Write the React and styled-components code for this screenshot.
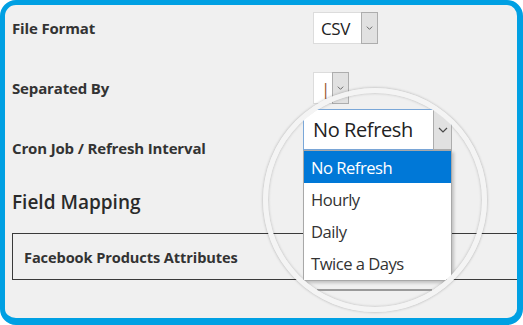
import React from 'react'
import styled, { createGlobalStyle } from 'styled-components'

const Global = createGlobalStyle`
  html, body { margin: 0; padding: 0; background: #ffffff; }
  body { font-family: "Open Sans", "Noto Sans", sans-serif; }
`

const Chevron = ({ size = 7 }) => (
  <svg width={size} height={Math.round(size * 0.6)} viewBox="0 0 10 6">
    <polyline points="1,1 5,5 9,1" fill="none" stroke="#4a4a4a" strokeWidth="1.2" />
  </svg>
)

function Select({ value, width, height, fontSize, arrowWidth, valueColor, focused }) {
  return (
    <SelectBox $w={width} $h={height} $focused={focused}>
      <SelectValue $size={fontSize} $color={valueColor}>{value}</SelectValue>
      <Arrow $w={arrowWidth}>
        <Chevron size={arrowWidth > 18 ? 10 : 7} />
      </Arrow>
    </SelectBox>
  )
}

const options = ['No Refresh', 'Hourly', 'Daily', 'Twice a Days']

function App() {
  return (
    <>
      <Global />
      <Frame>
        <Form>
          <Row>
            <Label>File Format</Label>
            <Select value="CSV" width={65} height={32} fontSize={17} arrowWidth={17} />
          </Row>
          <Row>
            <Label>Separated By</Label>
            <Select value="|" width={36} height={32} fontSize={17} arrowWidth={17} valueColor="#9a5b2e" />
          </Row>
          <Row>
            <Label>Cron Job / Refresh Interval</Label>
            {/* the real select sits under the magnifier, so only its box is kept */}
            <Select value="" width={120} height={32} fontSize={14} arrowWidth={17} />
          </Row>
        </Form>
        <Heading>Field Mapping</Heading>
        <Table>
          <HeadCell>Facebook Products Attributes</HeadCell>
        </Table>

        <Magnifier>
          <ZoomSelect>
            <Select value="No Refresh" width={149} height={41} fontSize={20} arrowWidth={19} focused />
          </ZoomSelect>
          <List>
            {options.map((o, i) => (
              <Option key={o} $active={i === 0}>{o}</Option>
            ))}
          </List>
          <Shade />
        </Magnifier>
      </Frame>
    </>
  )
}

const Frame = styled.div`
  position: relative;
  box-sizing: border-box;
  width: 523px;
  height: 325px;
  border: 5px solid #00a0e3;
  border-bottom-width: 7px;
  border-right-width: 6px;
  border-radius: 16px;
  background: #f0f0f0;
  overflow: hidden;
  padding: 7px 0 0 7px;
`

const Form = styled.div`
  display: flex;
  flex-direction: column;
  gap: 28px;
`

const Row = styled.div`
  display: grid;
  grid-template-columns: 301px auto;
  align-items: center;
  height: 32px;
`

const Label = styled.div`
  font-size: 15px;
  font-weight: 700;
  color: #333;
  letter-spacing: -0.15px;
`

const SelectBox = styled.div`
  box-sizing: border-box;
  display: flex;
  width: ${p => p.$w}px;
  height: ${p => p.$h}px;
  background: #fff;
  border: 1px solid ${p => (p.$focused ? '#7aa7d8' : '#dcdcdc')};
`

const SelectValue = styled.div`
  flex: 1;
  display: flex;
  align-items: center;
  padding-left: ${p => (p.$size > 18 ? 9 : 7)}px;
  font-size: ${p => p.$size}px;
  color: ${p => p.$color || '#222'};
  letter-spacing: -0.4px;
  white-space: nowrap;
  overflow: hidden;
`

const Arrow = styled.div`
  box-sizing: border-box;
  width: ${p => p.$w}px;
  margin: -1px -1px -1px 0;
  background: #e1e1e1;
  border: 1px solid #adadad;
  display: flex;
  align-items: center;
  justify-content: center;
`

const Heading = styled.div`
  margin-top: 25px;
  height: 26px;
  line-height: 26px;
  font-size: 19px;
  font-weight: 600;
  color: #2a2a2a;
`

const Table = styled.div`
  box-sizing: border-box;
  margin-top: 18px;
  width: 540px;
  height: 47px;
  border: 1px solid #3a3a3a;
  display: flex;
  align-items: center;
`

const HeadCell = styled.div`
  padding-left: 11px;
  font-size: 14.6px;
  font-weight: 700;
  color: #333;
  letter-spacing: -0.1px;
`

const Magnifier = styled.div`
  position: absolute;
  left: 258px;
  top: 83px;
  box-sizing: border-box;
  width: 224px;
  height: 224px;
  border-radius: 50%;
  border: 5px solid #f4f4f4;
  box-shadow: 0 0 3px rgba(0, 0, 0, 0.3), inset 0 0 3px rgba(0, 0, 0, 0.25);
  overflow: hidden;
`

const ZoomSelect = styled.div`
  position: absolute;
  left: 35px;
  top: 16px;
  background: #f0f0f0;
`

const List = styled.div`
  position: absolute;
  left: 35px;
  top: 57px;
  box-sizing: border-box;
  width: 149px;
  height: 131px;
  background: #fff;
  border: 1px solid #a8a8a8;
  box-shadow: 2px 2px 3px rgba(0, 0, 0, 0.2);
`

const Option = styled.div`
  height: 32px;
  display: flex;
  align-items: center;
  padding-left: 7px;
  font-size: 16.6px;
  letter-spacing: -0.5px;
  color: ${p => (p.$active ? '#fff' : '#333')};
  background: ${p => (p.$active ? '#0078d7' : 'transparent')};
`

const Shade = styled.div`
  position: absolute;
  left: 49px;
  top: 196px;
  width: 115px;
  height: 2px;
  background: #9a9a9a;
`

export default App
